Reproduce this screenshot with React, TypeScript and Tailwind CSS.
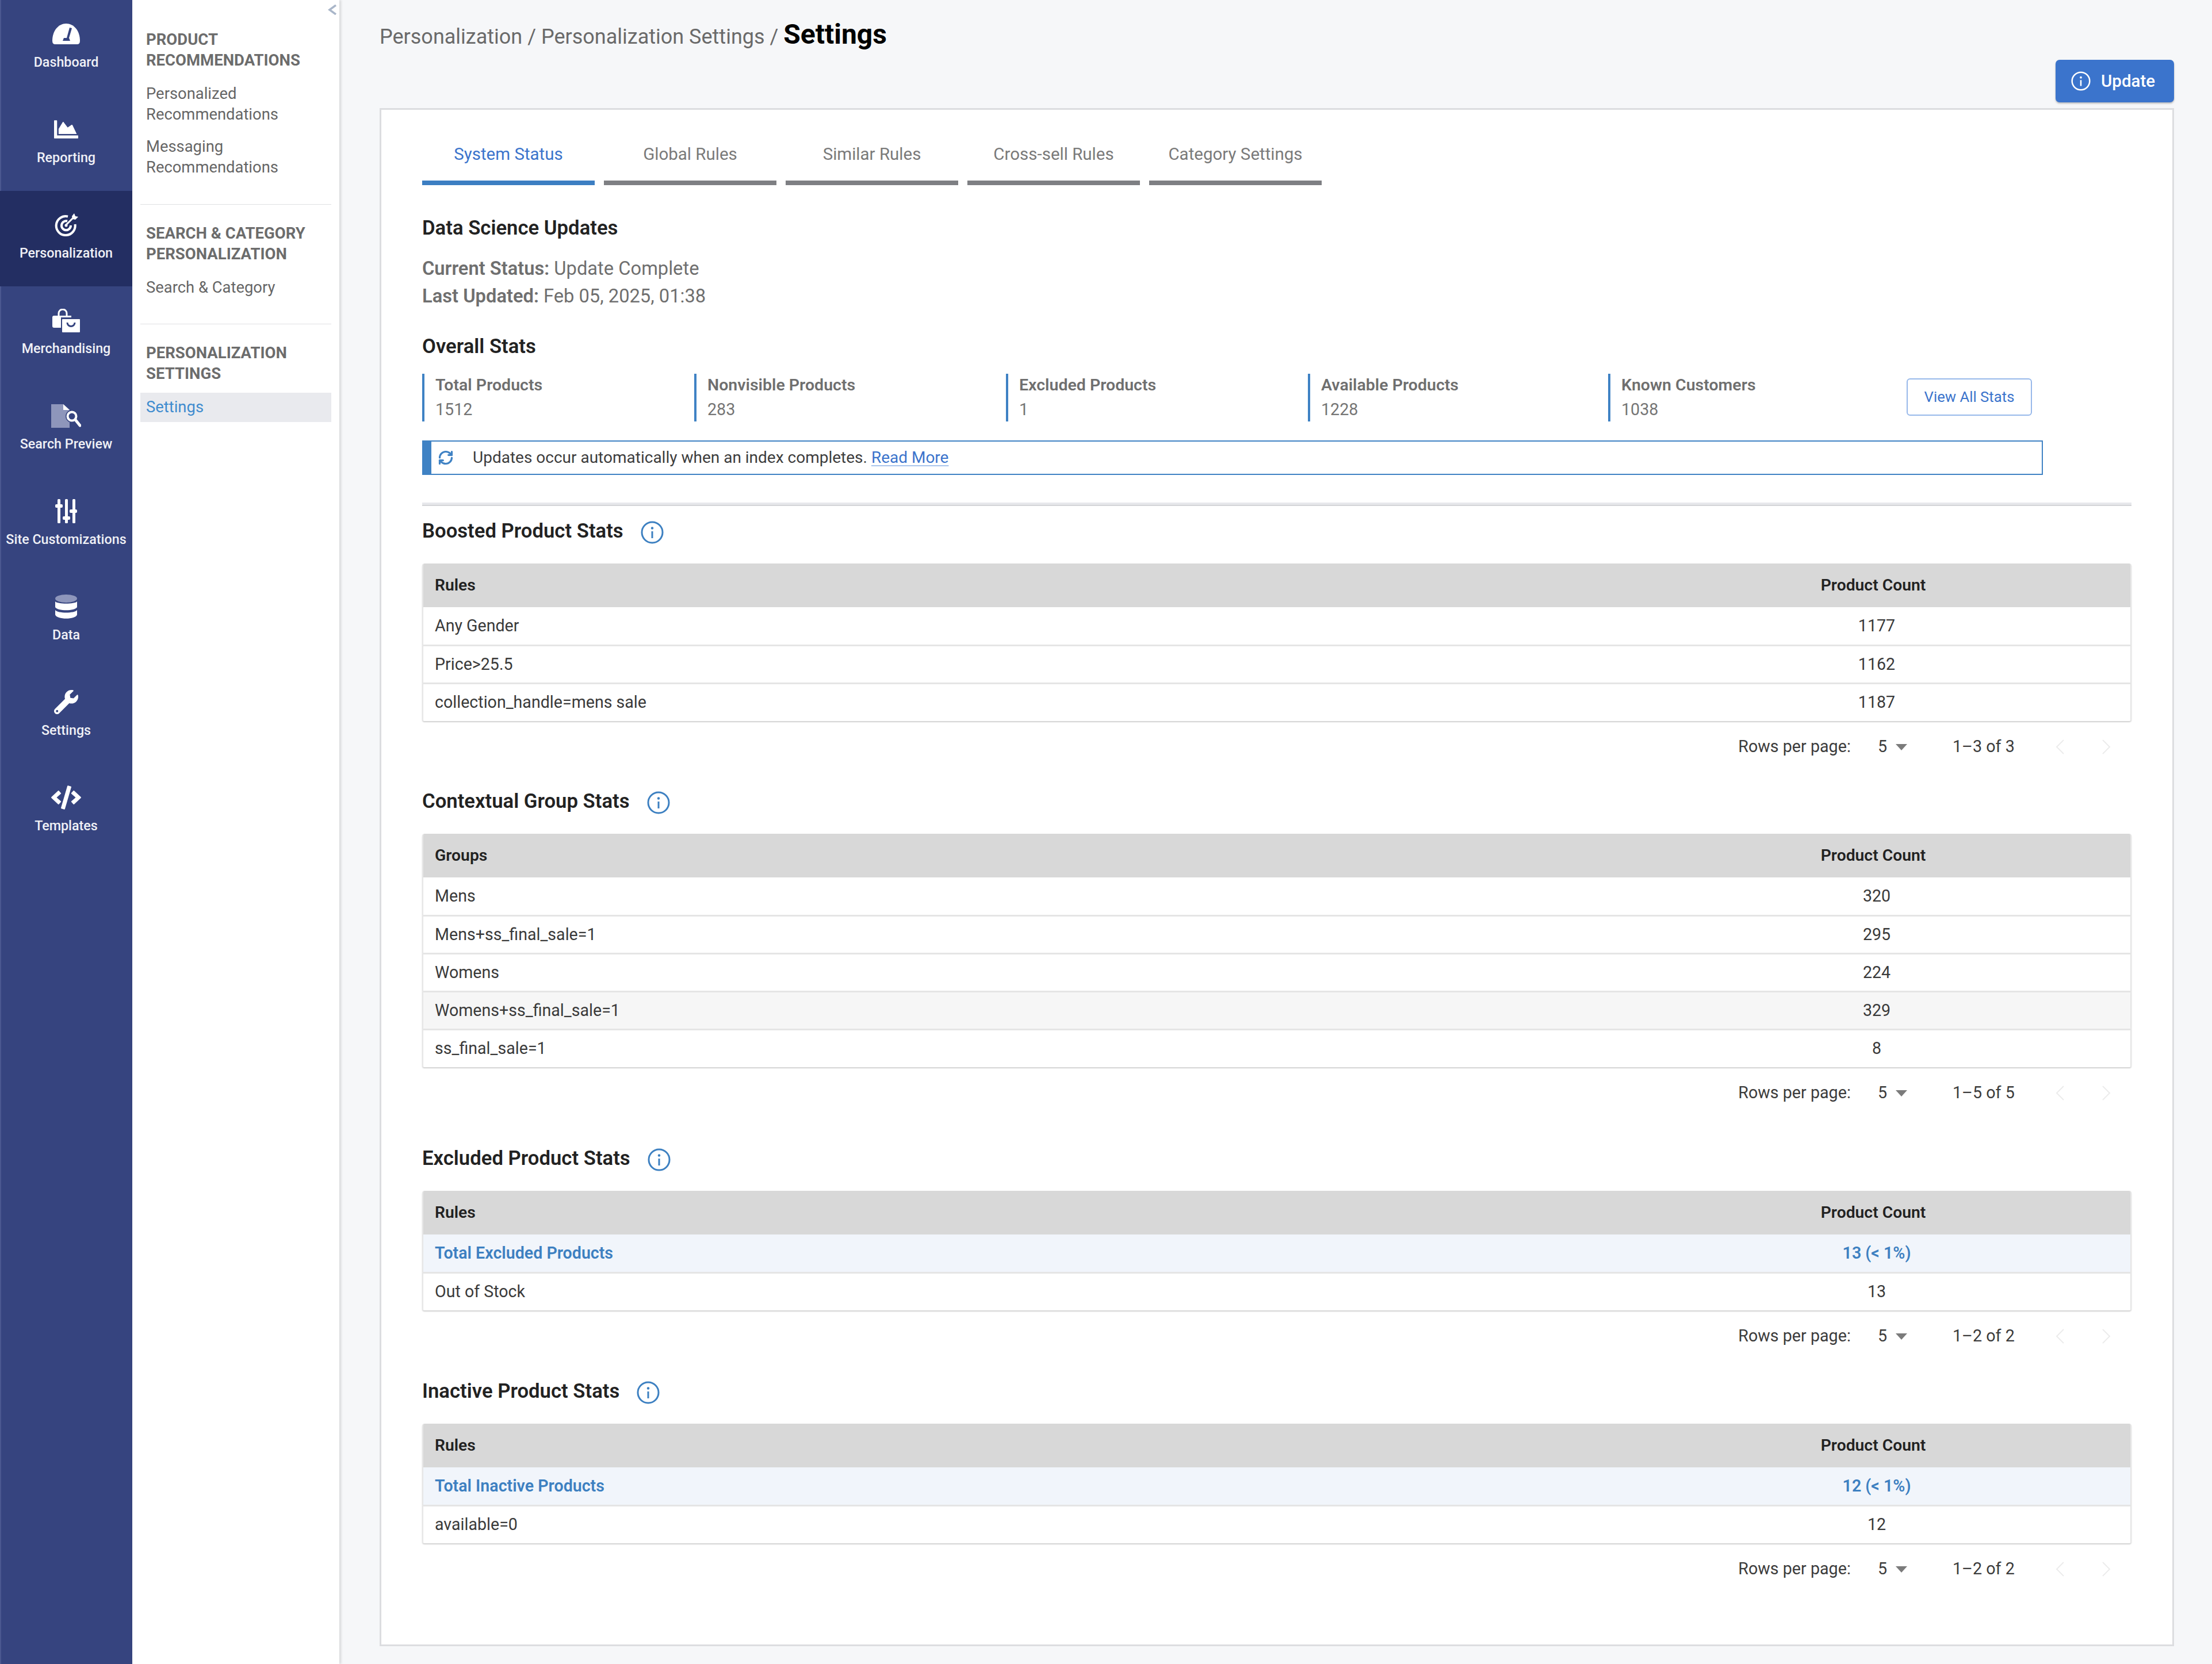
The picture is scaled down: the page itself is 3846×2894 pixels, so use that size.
import { RefreshCw } from "lucide-react";
import { FaChartArea, FaCode, FaWrench } from "react-icons/fa";

type Row = { label: string; count: string; total?: boolean; shade?: boolean };
type Section = {
  title: string;
  column: string;
  rows: Row[];
  range: string;
  gap: string;
};

const SECTIONS: Section[] = [
  {
    title: "Boosted Product Stats",
    column: "Rules",
    range: "1–3 of 3",
    gap: "mt-[19px]",
    rows: [
      { label: "Any Gender", count: "1177" },
      { label: "Price>25.5", count: "1162" },
      { label: "collection_handle=mens sale", count: "1187" },
    ],
  },
  {
    title: "Contextual Group Stats",
    column: "Groups",
    range: "1–5 of 5",
    gap: "mt-[45px]",
    rows: [
      { label: "Mens", count: "320" },
      { label: "Mens+ss_final_sale=1", count: "295" },
      { label: "Womens", count: "224" },
      { label: "Womens+ss_final_sale=1", count: "329", shade: true },
      { label: "ss_final_sale=1", count: "8" },
    ],
  },
  {
    title: "Excluded Product Stats",
    column: "Rules",
    range: "1–2 of 2",
    gap: "mt-[64px]",
    rows: [
      { label: "Total Excluded Products", count: "13 (< 1%)", total: true },
      { label: "Out of Stock", count: "13" },
    ],
  },
  {
    title: "Inactive Product Stats",
    column: "Rules",
    range: "1–2 of 2",
    gap: "mt-[46px]",
    rows: [
      { label: "Total Inactive Products", count: "12 (< 1%)", total: true },
      { label: "available=0", count: "12" },
    ],
  },
];

const STATS = [
  { label: "Total Products", value: "1512", width: "w-[473px]" },
  { label: "Nonvisible Products", value: "283", width: "w-[542px]" },
  { label: "Excluded Products", value: "1", width: "w-[525px]" },
  { label: "Available Products", value: "1228", width: "w-[522px]" },
  { label: "Known Customers", value: "1038", width: "w-[519px]" },
];

const TABS = ["System Status", "Global Rules", "Similar Rules", "Cross-sell Rules", "Category Settings"];

function DashboardIcon() {
  return (
    <svg width="48" height="36" viewBox="0 0 48 36">
      <path d="M5 36Q0 36 0 30C0 12 11 0 24 0C37 0 48 12 48 30Q48 36 43 36Z" fill="#fff" />
      <path d="M30 7L34 8L29 25L31 30H18L20 25H25Z" fill="#36447f" />
    </svg>
  );
}

function TargetIcon() {
  return (
    <svg width="42" height="40" viewBox="0 0 42 40" fill="none" stroke="#fff">
      <path d="M24 5.5A16.5 16.5 0 1 0 36.5 19" strokeWidth="4" />
      <path d="M23 13.5A8 8 0 1 0 29 21" strokeWidth="4" />
      <path d="M20 21L34 7" strokeWidth="3" />
      <path d="M31 5L35 0L37 5L42 6L37 11L32 10Z" fill="#fff" stroke="none" />
      <circle cx="21" cy="21" r="2.5" fill="#fff" stroke="none" />
    </svg>
  );
}

function BagsIcon() {
  return (
    <svg width="48" height="41" viewBox="0 0 48 41" fill="none">
      <path d="M11 12V8a7 7 0 0 1 14 0v4" stroke="#fff" strokeWidth="3" />
      <path d="M3 12H33V33H3Q0 33 0 30V15Q0 12 3 12Z" fill="#fff" />
      <rect x="15" y="15" width="33" height="26" fill="#36447f" />
      <rect x="17" y="18" width="31" height="23" rx="1" fill="#fff" />
      <path d="M26 24a6.500 6.500 0 0 0 13 0" stroke="#36447f" strokeWidth="3" />
    </svg>
  );
}

function FileSearchIcon() {
  return (
    <svg width="52" height="41" viewBox="0 0 52 41" fill="none">
      <path d="M0 0H21L32 10V41H0Z" fill="#8e96bb" />
      <path d="M21 0L32 10H21Z" fill="#fff" />
      <circle cx="36" cy="21" r="11" fill="#36447f" />
      <circle cx="36" cy="21" r="7.500" stroke="#fff" strokeWidth="4" />
      <path d="M42 27L50 37" stroke="#fff" strokeWidth="5" strokeLinecap="round" />
    </svg>
  );
}

function SlidersIcon() {
  return (
    <svg width="38" height="42" viewBox="0 0 38 42" fill="#fff">
      <rect x="4" y="0" width="5" height="42" rx="1.500" />
      <rect x="0" y="9" width="13" height="6" rx="2" />
      <rect x="17" y="0" width="5" height="42" rx="1.500" />
      <rect x="13" y="30" width="13" height="6" rx="2" />
      <rect x="30" y="0" width="5" height="42" rx="1.500" />
      <rect x="25" y="18" width="13" height="6" rx="2" />
    </svg>
  );
}

function DatabaseIcon() {
  return (
    <svg width="38" height="42" viewBox="0 0 38 42">
      <ellipse cx="19" cy="7" rx="19" ry="7" fill="#8e96bb" />
      <path d="M0 12C4 17 34 17 38 12V22C34 29 4 29 0 22Z" fill="#fff" />
      <path d="M0 27C4 33 34 33 38 27V35C36 44 2 44 0 35Z" fill="#fff" />
    </svg>
  );
}

const NAV = [
  { label: "Dashboard", icon: <DashboardIcon /> },
  { label: "Reporting", icon: <FaChartArea className="w-[42px] h-[42px] text-white" /> },
  { label: "Personalization", icon: <TargetIcon />, active: true },
  { label: "Merchandising", icon: <BagsIcon /> },
  { label: "Search Preview", icon: <FileSearchIcon /> },
  { label: "Site Customizations", icon: <SlidersIcon /> },
  { label: "Data", icon: <DatabaseIcon /> },
  { label: "Settings", icon: <FaWrench className="w-[42px] h-[42px] text-white" /> },
  { label: "Templates", icon: <FaCode className="w-[52px] h-[42px] text-white" /> },
];

function InfoIcon({ size, color }: { size: number; color: string }) {
  return (
    <svg width={size} height={size} viewBox="0 0 40 40" fill="none">
      <circle cx="20" cy="20" r="18" stroke={color} strokeWidth="3" />
      <circle cx="20" cy="12.500" r="2.200" fill={color} />
      <rect x="18.500" y="18" width="3" height="12" fill={color} />
    </svg>
  );
}

function PanelHeading({ children, className = "" }: { children: React.ReactNode; className?: string }) {
  return <div className={`pl-[10px] text-[27.5px] leading-[36px] font-bold text-[#6c6c6c] ${className}`}>{children}</div>;
}

function PanelLink({ children, className = "" }: { children: React.ReactNode; className?: string }) {
  return <div className={`pl-[10px] text-[27.4px] leading-[36px] text-[#666666] ${className}`}>{children}</div>;
}

function Pagination({ range }: { range: string }) {
  return (
    <div className="mt-[20px] h-[50px] flex items-center justify-end text-[28.700px] text-[#3c3c3c]">
      <span>Rows per page:</span>
      <span className="ml-[47px]">5</span>
      <svg className="ml-[15px] mr-[79px]" width="20" height="11" viewBox="0 0 20 11">
        <path d="M0 0H20L10 11Z" fill="#7b7b7b" />
      </svg>
      <span className="w-[107px] whitespace-nowrap">{range}</span>
      <div className="flex ml-[40px] mr-[4px]">
        <div className="w-[80px] flex justify-center">
          <svg width="16" height="28" viewBox="0 0 16 28" fill="none">
            <path d="M14 2L2 14L14 26" stroke="#ececec" strokeWidth="2" />
          </svg>
        </div>
        <div className="w-[80px] flex justify-center">
          <svg width="16" height="28" viewBox="0 0 16 28" fill="none">
            <path d="M2 2L14 14L2 26" stroke="#ececec" strokeWidth="2" />
          </svg>
        </div>
      </div>
    </div>
  );
}

function StatsSection({ section }: { section: Section }) {
  return (
    <section className={section.gap}>
      <div className="h-[48px] flex items-center">
        <h2 className="text-[34.700px] font-semibold text-[#222222] whitespace-nowrap">{section.title}</h2>
        <span className="ml-[30px] mt-[6px]">
          <InfoIcon size={40} color="#3d80c1" />
        </span>
      </div>
      <div className="mt-[33px] rounded-[4px] overflow-hidden shadow-[0_2px_2px_rgba(0,0,0,0.18)] border-x-2 border-[#e6e6e6]">
        <table className="w-full table-fixed text-[28.600px]">
          <colgroup>
            <col />
            <col className="w-[632px]" />
          </colgroup>
          <thead className="bg-[#d8d8d8]">
            <tr className="h-[76px] text-[28.300px] text-[#222222]">
              <th className="pl-[20px] text-left font-semibold">{section.column}</th>
              <th className="pr-[262px] text-center font-semibold">Product Count</th>
            </tr>
          </thead>
          <tbody>
            {section.rows.map((r) => (
              <tr
                key={r.label}
                className={`h-[66px] border-b-[3px] border-[#e5e5e5] last:border-b-0 ${
                  r.total ? "bg-[#f1f5fb] text-[#3d80c1] font-semibold" : r.shade ? "bg-[#f6f6f6] text-[#3a3a3a]" : "bg-white text-[#3a3a3a]"
                }`}
              >
                <td className="pl-[20px]">{r.label}</td>
                <td className="pr-[262px] pl-[12px] text-center">{r.count}</td>
              </tr>
            ))}
          </tbody>
        </table>
      </div>
      <Pagination range={section.range} />
    </section>
  );
}

export default function App() {
  return (
    <div className="w-[3846px] h-[2894px] overflow-hidden flex bg-[#f6f7f9] font-[Roboto,sans-serif]">
      <nav className="w-[230px] shrink-0 bg-[#36447f] border-l-2 border-[#4b5890]">
        {NAV.map((n) => (
          <div key={n.label} className={`h-[166px] -ml-[2px] pt-[35px] flex flex-col items-center ${n.active ? "bg-[#232e62]" : ""}`}>
            <div className="h-[48px] flex items-center justify-center">{n.icon}</div>
            <div className="mt-[12px] text-[23.300px] leading-[26px] font-medium text-[#f0f1f6] whitespace-nowrap">{n.label}</div>
          </div>
        ))}
      </nav>

      <aside className="relative w-[360px] shrink-0 bg-white px-[14px] pt-[51px] shadow-[3px_0_4px_rgba(0,0,0,0.12)]">
        <svg className="absolute top-[8px] left-[340px]" width="16" height="18" viewBox="0 0 16 18" fill="none">
          <path d="M14 1L3 9L14 17" stroke="#a9b6c9" strokeWidth="3.500" />
        </svg>
        <PanelHeading>PRODUCT<br />RECOMMENDATIONS</PanelHeading>
        <PanelLink className="mt-[22px]">Personalized<br />Recommendations</PanelLink>
        <PanelLink className="mt-[20px]">Messaging<br />Recommendations</PanelLink>
        <div className="mt-[46px] h-[1px] bg-[#dfe0e3]" />
        <PanelHeading className="mt-[32px]">SEARCH &amp; CATEGORY<br />PERSONALIZATION</PanelHeading>
        <PanelLink className="mt-[22px]">Search &amp; Category</PanelLink>
        <div className="mt-[45px] h-[1px] bg-[#dfe0e3]" />
        <PanelHeading className="mt-[32px]">PERSONALIZATION<br />SETTINGS</PanelHeading>
        <div className="mt-[15px] h-[51px] pl-[10px] flex items-center bg-[#e9eaee] text-[27.400px] text-[#3f8ccf]">Settings</div>
      </aside>

      <main className="flex-1 pl-[70px] pr-[66px]">
        <div className="h-[104px] pt-[30px] flex items-baseline text-[36px] leading-[60px] text-[#6a6a6a] whitespace-pre">
          <span>Personalization / Personalization Settings / </span>
          <span className="text-[48px] font-bold text-black">Settings</span>
        </div>
        <div className="flex justify-end">
          <button className="w-[206px] h-[74px] pl-[27px] flex items-center gap-[18px] rounded-[7px] bg-[#3b74cc] text-white text-[29.500px] font-medium shadow-[0_2px_3px_rgba(0,0,0,0.25)]">
            <InfoIcon size={34} color="#ffffff" />
            Update
          </button>
        </div>

        <div className="mt-[10px] h-[2675px] bg-white border-[3px] border-[#dcdde0] pl-[71px] pr-[71px] pt-[39px]">
          <div className="flex gap-[16px]">
            {TABS.map((t, i) => (
              <div
                key={t}
                className={`w-[300px] h-[92px] pb-2 flex items-center justify-center border-b-[8px] text-[29.500px] ${
                  i === 0 ? "border-[#3c7ec2] text-[#3b74cc]" : "border-[#7e7f83] text-[#7a7a7a]"
                }`}
              >
                {t}
              </div>
            ))}
          </div>

          <h2 className="mt-[50px] text-[34.700px] leading-[48px] font-semibold text-[#222222]">Data Science Updates</h2>
          <div className="mt-[23px] text-[32.700px] leading-[48px] text-[#6f6f6f]">
            <div><span className="font-semibold">Current Status:</span> Update Complete</div>
            <div><span className="font-semibold">Last Updated:</span> Feb 05, 2025, 01:38</div>
          </div>

          <h2 className="mt-[39px] text-[34.700px] leading-[48px] font-semibold text-[#222222]">Overall Stats</h2>
          <div className="mt-[24px] flex items-start">
            {STATS.map((s) => (
              <div key={s.label} className={`${s.width} h-[83px] pl-[19px] border-l-[4px] border-[#3f82c4]`}>
                <div className="leading-[40px] text-[28.500px] font-semibold text-[#6f6f6f]">{s.label}</div>
                <div className="mt-[1px] leading-[42px] text-[28.700px] text-[#757575]">{s.value}</div>
              </div>
            ))}
            <button className="mt-[8px] w-[218px] h-[65px] rounded-[6px] border-2 border-[#97b8ea] text-[25.700px] text-[#3b74cc]">View All Stats</button>
          </div>

          <div className="mt-[33px] w-[2818px] h-[60px] flex items-center border-2 border-l-[16px] border-[#3f82c4] text-[28px] text-[#3d3d3d]">
            <RefreshCw className="ml-[11px] text-[#3f82c4]" size={28} strokeWidth={2.75} />
            <span className="ml-[33px]">Updates occur automatically when an index completes.&nbsp;</span>
            <a className="text-[#3b74cc] underline decoration-[#a9c4ec] underline-offset-4">Read More</a>
          </div>

          <div className="mt-[48px] h-[6px] bg-[#e7e8eb] border-b-2 border-[#d3d4d8]" />

          {SECTIONS.map((s) => (
            <StatsSection key={s.title} section={s} />
          ))}
        </div>
      </main>
    </div>
  );
}
